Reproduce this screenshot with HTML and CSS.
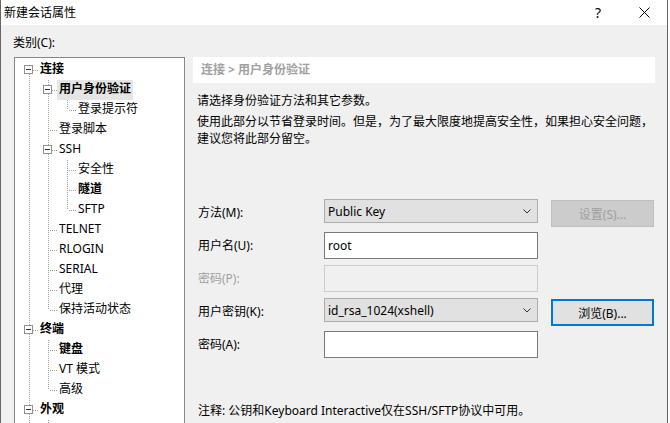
FILE: index.html
```html
<!DOCTYPE html>
<html lang="zh-CN">
  <head>
    <meta charset="UTF-8" />
    <meta name="viewport" content="width=device-width, initial-scale=1.0" />
    <title>新建会话属性</title>
    <link rel="stylesheet" href="styles.css">
  </head>
  <body>
    <div class="window">
      <div class="titlebar">
        <span class="title">新建会话属性</span>
        <span class="caption-btn help">?</span>
        <span class="caption-btn close">
          <svg width="11" height="11" viewBox="0 0 11 11"><path d="M0.5 0.5L10.5 10.5M10.5 0.5L0.5 10.5" stroke="#000" stroke-width="1" fill="none"/></svg>
        </span>
      </div>

      <div class="content">
        <div class="left-pane">
          <div class="cat-label">类别(C):</div>
          <div class="tree">
            <div class="node"><span class="cell first"><span class="box"></span></span><span class="label bold">连接</span></div>
            <div class="node"><span class="cell pipe"></span><span class="cell tee"><span class="box"></span></span><span class="label bold selected">用户身份验证</span></div>
            <div class="node"><span class="cell pipe"></span><span class="cell pipe"></span><span class="cell end"></span><span class="label">登录提示符</span></div>
            <div class="node"><span class="cell pipe"></span><span class="cell tee"></span><span class="label">登录脚本</span></div>
            <div class="node"><span class="cell pipe"></span><span class="cell tee"><span class="box"></span></span><span class="label">SSH</span></div>
            <div class="node"><span class="cell pipe"></span><span class="cell pipe"></span><span class="cell tee"></span><span class="label">安全性</span></div>
            <div class="node"><span class="cell pipe"></span><span class="cell pipe"></span><span class="cell tee"></span><span class="label bold">隧道</span></div>
            <div class="node"><span class="cell pipe"></span><span class="cell pipe"></span><span class="cell end"></span><span class="label">SFTP</span></div>
            <div class="node"><span class="cell pipe"></span><span class="cell tee"></span><span class="label">TELNET</span></div>
            <div class="node"><span class="cell pipe"></span><span class="cell tee"></span><span class="label">RLOGIN</span></div>
            <div class="node"><span class="cell pipe"></span><span class="cell tee"></span><span class="label">SERIAL</span></div>
            <div class="node"><span class="cell pipe"></span><span class="cell tee"></span><span class="label">代理</span></div>
            <div class="node"><span class="cell pipe"></span><span class="cell end"></span><span class="label">保持活动状态</span></div>
            <div class="node"><span class="cell tee"><span class="box"></span></span><span class="label bold">终端</span></div>
            <div class="node"><span class="cell pipe"></span><span class="cell tee"></span><span class="label bold">键盘</span></div>
            <div class="node"><span class="cell pipe"></span><span class="cell tee"></span><span class="label">VT 模式</span></div>
            <div class="node"><span class="cell pipe"></span><span class="cell end"></span><span class="label">高级</span></div>
            <div class="node"><span class="cell tee"><span class="box"></span></span><span class="label bold">外观</span></div>
            <div class="node"><span class="cell pipe"></span><span class="cell tee"></span></div>
          </div>
        </div>

        <div class="right-pane">
          <div class="crumb">连接 &gt; 用户身份验证</div>
          <p class="intro">请选择身份验证方法和其它参数。</p>
          <p class="desc">使用此部分以节省登录时间。但是，为了最大限度地提高安全性，如果担心安全问题，<br>建议您将此部分留空。</p>

          <div class="form">
            <div class="field">
              <label class="field-label">方法(M):</label>
              <div class="combo"><span>Public Key</span><svg width="8" height="5" viewBox="0 0 8 5"><path d="M0.5 0.5L4 4L7.5 0.5" stroke="#333" fill="none"/></svg></div>
              <button class="btn" disabled>设置(S)...</button>
            </div>
            <div class="field">
              <label class="field-label">用户名(U):</label>
              <input class="text-input" type="text" value="root">
            </div>
            <div class="field">
              <label class="field-label disabled">密码(P):</label>
              <input class="text-input" type="password" disabled>
            </div>
            <div class="field">
              <label class="field-label">用户密钥(K):</label>
              <div class="combo"><span>id_rsa_1024(xshell)</span><svg width="8" height="5" viewBox="0 0 8 5"><path d="M0.5 0.5L4 4L7.5 0.5" stroke="#333" fill="none"/></svg></div>
              <button class="btn focused">浏览(B)...</button>
            </div>
            <div class="field">
              <label class="field-label">密码(A):</label>
              <input class="text-input" type="password">
            </div>
          </div>

          <p class="note">注释: 公钥和Keyboard Interactive仅在SSH/SFTP协议中可用。</p>
        </div>
      </div>
    </div>
  </body>
</html>
```

FILE: styles.css
```css
html, body {
  margin: 0;
  padding: 0;
  height: 423px;
  overflow: hidden;
  background-color: #fff;
}
body {
  font-family: "Noto Sans", "Noto Sans CJK SC", sans-serif;
  font-size: 12px;
  color: #000;
}
.window {
  width: 666px;
  height: 423px;
  border-left: 1px solid #666;
  border-right: 1px solid #666;
  display: flex;
  flex-direction: column;
  background-color: #f0f0f0;
}
.titlebar {
  height: 25px;
  background-color: #fff;
  display: flex;
  align-items: center;
  padding-left: 3px;
}
.title {
  line-height: 16px;
}
.caption-btn {
  width: 46px;
  height: 25px;
  display: flex;
  align-items: center;
  justify-content: center;
}
.help {
  margin-left: auto;
  font-size: 14px;
}

.content {
  display: flex;
  flex: 1;
  overflow: hidden;
}
.left-pane {
  padding: 10px 0 0 13px;
}
.cat-label {
  line-height: 16px;
  margin-left: -1px;
  margin-bottom: 6px;
}
.tree {
  width: 171px;
  height: 400px;
  box-sizing: border-box;
  border: 1px solid #828790;
  background-color: #fff;
  padding: 2px 0 0 5px;
  overflow: hidden;
}
.node {
  display: flex;
  height: 20px;
}
.cell {
  width: 19px;
  height: 20px;
  flex: none;
  position: relative;
}
.cell::before,
.cell::after {
  content: "";
  position: absolute;
}
.pipe::before,
.tee::before,
.end::before,
.first::before {
  left: 9px;
  width: 1px;
  background-image: linear-gradient(to bottom, #a0a0a0 50%, transparent 50%);
  background-size: 1px 2px;
}
.pipe::before,
.tee::before {
  top: 0;
  bottom: 0;
}
.end::before {
  top: 0;
  height: 10px;
}
.first::before {
  top: 10px;
  bottom: 0;
}
.tee::after,
.end::after,
.first::after {
  left: 10px;
  top: 10px;
  width: 9px;
  height: 1px;
  background-image: linear-gradient(to right, transparent 50%, #a0a0a0 50%);
  background-size: 2px 1px;
}
.box {
  position: absolute;
  left: 4px;
  top: 5px;
  width: 9px;
  height: 9px;
  box-sizing: border-box;
  border: 1px solid #919191;
  background-color: #fff;
  z-index: 1;
}
.box::after {
  content: "";
  position: absolute;
  left: 1px;
  top: 3px;
  width: 5px;
  height: 1px;
  background-color: #333;
}
.label {
  margin-left: -1px;
  padding: 0 2px 2px;
  line-height: 18px;
  white-space: nowrap;
}
.label.bold {
  font-weight: bold;
}
.label.selected {
  background-color: #e5e5e5;
}

.right-pane {
  width: 462px;
  margin-left: 8px;
  padding-top: 32px;
}
.crumb {
  height: 26px;
  line-height: 26px;
  padding-left: 8px;
  background-color: #fff;
  color: #a0a0a0;
  font-weight: bold;
}
.intro,
.desc,
.note {
  line-height: 17px;
  margin: 0;
  padding-left: 4px;
  white-space: nowrap;
}
.intro {
  margin-top: 9px;
}
.desc {
  margin-top: 4px;
}
.form {
  margin-top: 52px;
  padding-left: 5px;
}
.field {
  display: flex;
  align-items: flex-start;
  height: 28px;
  margin-bottom: 5px;
}
.field-label {
  width: 126px;
  line-height: 28px;
}
.field-label.disabled {
  color: #a0a0a0;
}
.combo {
  width: 214px;
  height: 24px;
  box-sizing: border-box;
  border: 1px solid #adadad;
  background-color: #e1e1e1;
  display: flex;
  align-items: center;
  justify-content: space-between;
  padding: 0 6px 0 3px;
}
.text-input {
  width: 214px;
  height: 27px;
  box-sizing: border-box;
  margin: 0;
  border: 1px solid #7a7a7a;
  padding: 0 3px;
  font-family: inherit;
  font-size: 12px;
  background-color: #fff;
  outline: none;
}
.text-input:disabled {
  border-color: #cccccc;
  background-color: #f0f0f0;
}
.btn {
  width: 103px;
  height: 27px;
  margin: 1px 0 0 13px;
  box-sizing: border-box;
  border: 1px solid #adadad;
  background-color: #e1e1e1;
  font-family: inherit;
  font-size: 12px;
  color: #000;
  padding: 0;
}
.btn:disabled {
  background-color: #cccccc;
  border-color: #bfbfbf;
  color: #a0a0a0;
}
.btn.focused {
  border: 2px solid #0078d7;
}
.note {
  margin-top: 43px;
  padding-left: 5px;
}
```
